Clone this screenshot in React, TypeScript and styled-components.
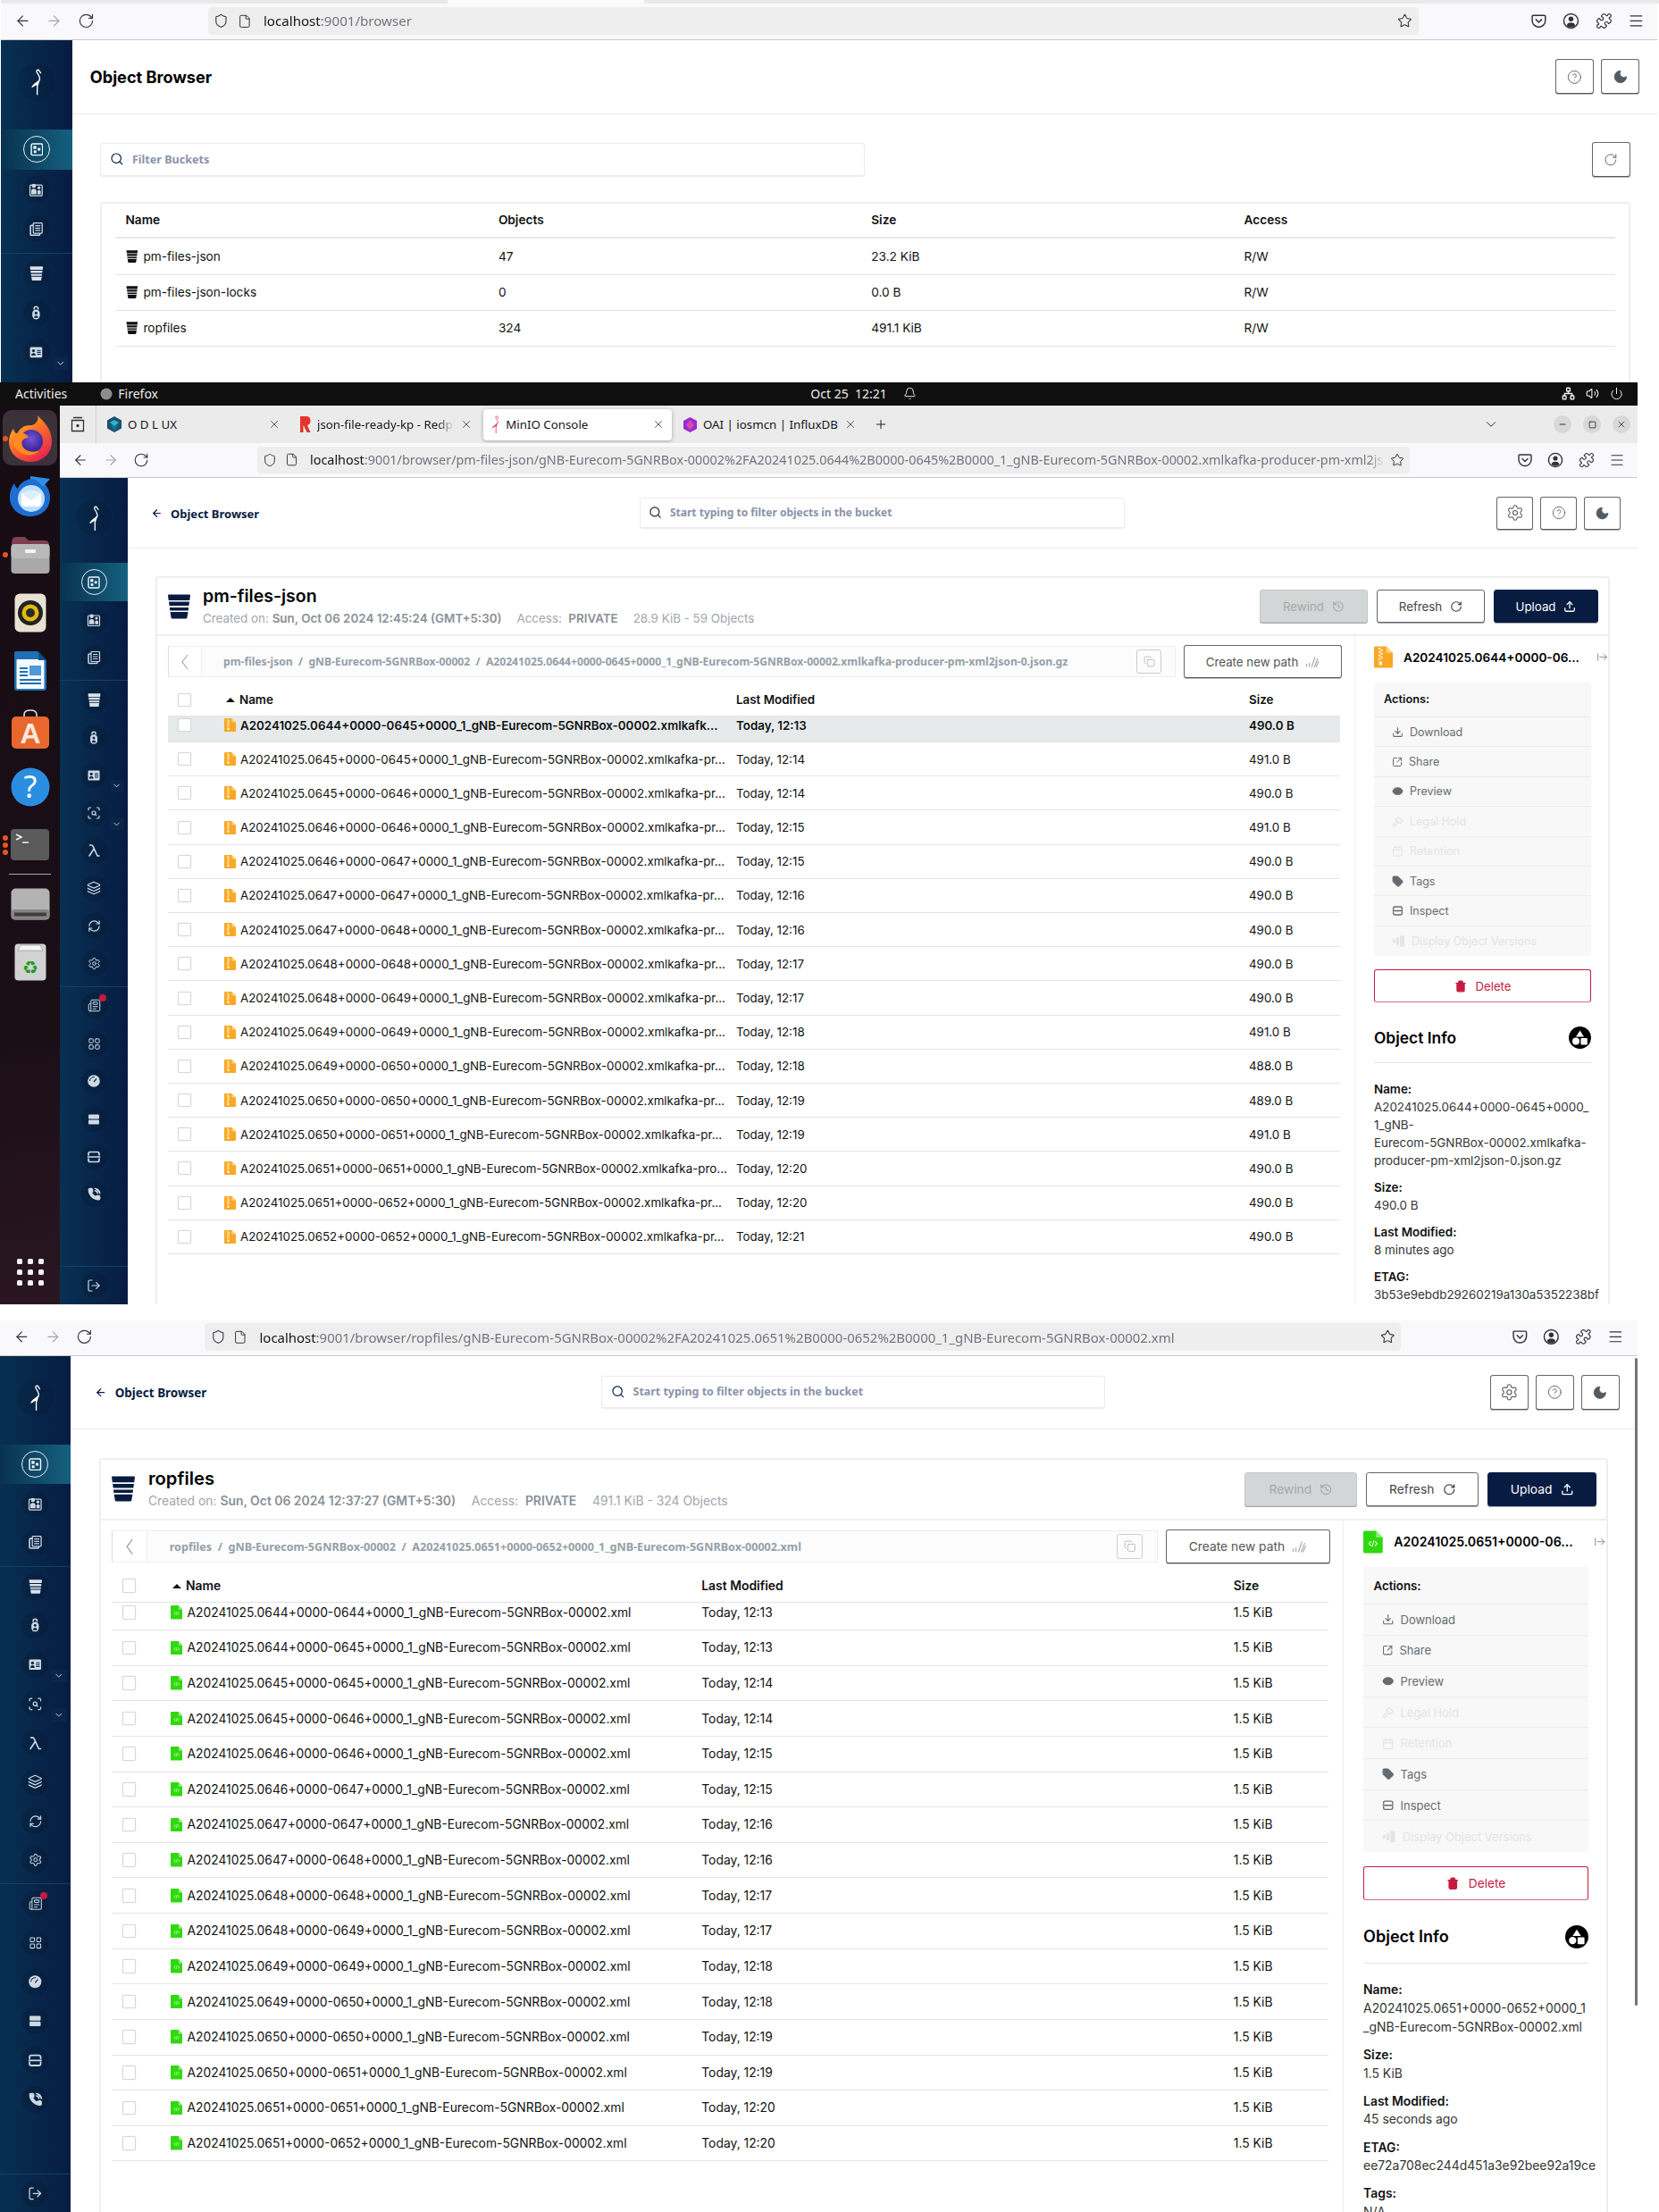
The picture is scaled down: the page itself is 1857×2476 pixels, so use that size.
import React from "react";
import styled, { createGlobalStyle } from "styled-components";
import {
  ArrowLeft, ArrowRight, RotateCw, Shield, File, Star, Menu, Puzzle, X, Plus, ChevronDown, Search,
  Settings, CircleHelp, Moon, History, Upload, Copy, Download, SquareArrowOutUpRight, Eye, Gavel,
  Calendar, Tag, Trash2, ArrowRightFromLine, LayoutGrid, Layers, RefreshCw,
  Newspaper, PhoneCall, LogOut, Minus, Square, Bell, Volume2, Power, Network, ScanSearch,
} from "lucide-react";

const INTER = `Inter, "Liberation Sans", sans-serif`;
const UBU = `"Noto Sans", "Open Sans", sans-serif`;
const NAVY = "#081c42";

const GlobalStyle = createGlobalStyle`
  html, body { margin: 0; padding: 0; background: #fff; }
  body { font-family: ${INTER}; color: #111; width: 1857px; height: 2476px; overflow: hidden; }
  * { box-sizing: border-box; }
`;

/* ---------- frames ---------- */
const Page = styled.div`display: flex; flex-direction: column; width: 1857px; height: 2476px; overflow: hidden;`;
const FirstShot = styled.section`height: 428px; overflow: hidden; padding-left: 1px;`;
const TabTail = styled.div`
  height: 4px; background: #e9e9e9; display: flex; padding-left: 500px;
  &::before { content: ""; width: 220px; background: #fbfbfb; }
`;
const SecondShot = styled.section`height: 1032px; overflow: hidden; width: 1833px; display: flex; flex-direction: column;`;
const DesktopRow = styled.div`display: flex; flex: 1; min-height: 0;`;
const ThirdShot = styled.section`height: 1016px; overflow: hidden; padding-top: 17.5px; position: relative;`;
const Browser = styled.div<{ $zoom: number; $h: number }>`
  zoom: ${(p) => p.$zoom};
  width: 1766px; height: ${(p) => p.$h}px;
  display: flex; flex-direction: column; overflow: hidden; background: #fff; flex: none;
`;
const ScrollThumb = styled.div`position: absolute; left: 1830px; top: 60px; width: 3px; height: 725px; background: #757575; border-radius: 2px;`;

/* ---------- GNOME ---------- */
const TopBar = styled.header`
  height: 26px; background: #0f0f0f; color: #ececec; display: grid; grid-template-columns: 1fr auto 1fr;
  align-items: center; font: 14px ${UBU}; padding-bottom: 1px;
`;
const TopLeft = styled.div`display: flex; align-items: center; padding-left: 17px; gap: 37px;`;
const TopApp = styled.span`display: flex; align-items: center; gap: 6px;`;
const TopCenter = styled.div`display: flex; align-items: center; gap: 18px; margin-left: 100px;`;
const TopRight = styled.div`display: flex; justify-content: flex-end; align-items: center; gap: 12px; padding-right: 16px;`;
const Dock = styled.nav`
  width: 67px; flex: none; display: flex; flex-direction: column; padding-top: 4px;
  background: linear-gradient(170deg, #160c12 0%, #1b0f16 70%, #2a1620 100%);
`;
const DockItem = styled.div`height: 65px; flex: none; display: flex; align-items: center; justify-content: center; position: relative;`;
const DockHighlight = styled(DockItem)`
  &::before { content: ""; position: absolute; inset: 1px 3px 2px 3px; border-radius: 10px; background: #3a3238; }
  & > svg { position: relative; }
`;
const DockDots = styled.span`
  position: absolute; left: 3px; top: 50%; transform: translateY(-50%); display: flex; flex-direction: column; gap: 2px;
  & > i { width: 6px; height: 6px; border-radius: 50%; background: #e95420; display: block; }
`;
const DockSep = styled.hr`margin: 0 10px; height: 1px; border: 0; background: #a9a5a8; flex: none;`;
const AppGrid = styled.div`
  margin-top: auto; margin-bottom: 21px; align-self: center; display: grid; grid-template-columns: repeat(3, 6px); gap: 6px 6px;
  & > i { width: 6px; height: 6px; background: #f2f2f2; border-radius: 1.5px; display: block; }
`;

/* ---------- firefox chrome ---------- */
const TabStrip = styled.div`height: 42px; flex: none; display: flex; align-items: center; background: #ebebeb; color: #15141a; font: 13.5px ${UBU};`;
const FxView = styled.div`width: 41px; height: 42px; flex: none; display: flex; align-items: center; justify-content: center; border-right: 1px solid #cfcfd8;`;
const TabList = styled.div`display: flex; align-items: center; gap: 4px; padding-left: 3px;`;
const TabItem = styled.div<{ $active?: boolean }>`
  width: 211px; height: 35px; display: flex; align-items: center; padding: 0 8px 0 9px; gap: 7px; border-radius: 4px;
  background: ${(p) => (p.$active ? "#fff" : "transparent")};
  box-shadow: ${(p) => (p.$active ? "0 1px 4px rgba(0,0,0,.3)" : "none")};
`;
const TabTitle = styled.span<{ $fade?: boolean }>`
  flex: 1; min-width: 0; white-space: nowrap; overflow: hidden; font-size: 13.3px;
  -webkit-mask-image: ${(p) => (p.$fade ? "linear-gradient(90deg, #000 88%, transparent)" : "none")};
`;
const TabRight = styled.div`display: flex; align-items: center; margin-left: auto; padding-right: 8px;`;
const NewTab = styled.div`margin-left: 11px; display: flex; align-items: center;`;
const WinBtn = styled.span`width: 20px; height: 20px; border-radius: 50%; background: #d8d8d8; display: flex; align-items: center; justify-content: center; margin-left: 13px;`;
const Toolbar = styled.div`height: 39px; flex: none; display: flex; align-items: center; background: #f9f9fb; border-bottom: 1px solid #c8c8cc; padding-bottom: 1px;`;
const NavGroup = styled.div`width: 221px; flex: none; display: flex; align-items: center; gap: 16px; padding-left: 14px; color: #33323a;`;
const UrlPill = styled.div`width: 1290px; height: 30px; flex: none; background: #eeeeef; border-radius: 4px; display: flex; align-items: center; padding: 0 6px 0 6px; color: #33323a;`;
const UrlIcons = styled.div`width: 45px; flex: none; display: flex; gap: 9px; align-items: center;`;
const UrlText = styled.div`flex: 1; min-width: 0; white-space: nowrap; overflow: hidden; font: 14.4px ${UBU}; color: #74747c; margin: 0 6px 0 8px; -webkit-mask-image: linear-gradient(90deg, #000 98.5%, transparent);`;
const UrlHost = styled.span`color: #15141a;`;
const ToolIcons = styled.div`margin-left: auto; display: flex; align-items: center; gap: 16.5px; padding-right: 14px; color: #33323a;`;

/* ---------- sidebar ---------- */
const Body = styled.div`flex: 1; min-height: 0; display: flex;`;
const Side = styled.aside`width: 76px; height: 925px; flex: none; display: flex; flex-direction: column; background: linear-gradient(90deg, #073052 0%, ${NAVY} 100%); color: #cfd8e3;`;
const SideLogo = styled.div`height: 95px; flex: none; display: flex; align-items: flex-start; justify-content: center; padding-top: 25px;`;
const LogoDisc = styled.div`width: 40px; height: 40px; border-radius: 50%; display: flex; align-items: center; justify-content: center; background: rgba(0,0,0,.07);`;
const SideGroup = styled.div`display: flex; flex-direction: column; padding-bottom: 4px; border-bottom: 1px solid #0e4266;`;
const SideFree = styled.div`display: flex; flex-direction: column;`;
const SideBottom = styled.div`margin-top: auto; border-top: 1px solid #0e4266; display: flex; flex-direction: column;`;
const SideItem = styled.div<{ $active?: boolean }>`
  height: ${(p) => (p.$active ? 43 : 42.2)}px; flex: none; display: flex; align-items: center; justify-content: center; position: relative;
  background: ${(p) => (p.$active ? "linear-gradient(90deg, #08324f 0%, #15607f 100%)" : "transparent")};
`;
const SideDisc = styled.span<{ $active?: boolean }>`
  width: 29px; height: 29px; border-radius: 50%; display: flex; align-items: center; justify-content: center; position: relative;
  background: ${(p) => (p.$active ? "transparent" : "rgba(0,0,0,.1)")};
  border: ${(p) => (p.$active ? "1.5px solid #e8eef3" : "0")};
`;
const Chevron = styled.span`position: absolute; right: 5px; bottom: 2px; width: 15px; height: 14px; background: #0a2548; display: flex; align-items: center; justify-content: center;`;
const RedDot = styled.span`position: absolute; top: 2px; right: 1px; width: 8px; height: 8px; border-radius: 50%; background: #c51b3f;`;

/* ---------- shared page ---------- */
const Main = styled.main`flex: 1; min-width: 0; display: flex; flex-direction: column; height: 925px;`;
const PageHeader = styled.div`height: 79px; flex: none; display: flex; align-items: center; border-bottom: 1px solid #eaeaea;`;
const PageTitle = styled.h1`margin: 0 0 0 19px; font: 700 17.3px ${INTER}; color: #000;`;
const BackLink = styled.div`width: 573px; flex: none; padding-left: 26px; display: flex; align-items: center; gap: 9px; font: 700 13px ${UBU}; color: ${NAVY}; margin-top: 1px;`;
const HeaderBtns = styled.div`margin-left: auto; display: flex; gap: 8px; padding-right: 19px;`;
const IconBtn = styled.div`width: 41px; height: 37px; flex: none; border: 1px solid #666; border-bottom-color: #555; border-radius: 3px; display: flex; align-items: center; justify-content: center; background: #fff; color: #525a62; box-shadow: 0 1px 0 #bbb;`;
const FilterBox = styled.div<{ $w: number; $h: number }>`
  width: ${(p) => p.$w}px; height: ${(p) => p.$h}px; flex: none; display: flex; align-items: center; gap: 9px; padding-left: 9px;
  border: 1px solid #ececec; border-bottom: 2px solid #ececec; border-radius: 3px; background: #fff; color: ${NAVY};
`;
const Placeholder = styled.span`font: 700 12px ${UBU}; color: #8a93a8; white-space: nowrap;`;

/* ---------- bucket list ---------- */
const ListBar = styled.div`display: flex; justify-content: space-between; align-items: center; margin: 30px 29px 26px 30px;`;
const ListCard = styled.div`margin: 0 29px 0 30px; border: 2px solid #eee; border-radius: 3px; padding: 0 14px; flex: 1;`;
const BucketGrid = styled.div<{ $head?: boolean }>`
  display: grid; grid-template-columns: repeat(4, 397.5px) 1fr; align-items: center;
  height: ${(p) => (p.$head ? 38 : 38.2)}px; border-bottom: ${(p) => (p.$head ? "2px solid #e7e7e7" : "1px solid #e4e4e4")};
  font: ${(p) => (p.$head ? 600 : 400)} 13px ${INTER}; color: #111;
`;
const Cell = styled.div`padding-left: 11px; display: flex; align-items: center; gap: 6px; white-space: nowrap;`;

/* ---------- detail ---------- */
const DetailCard = styled.div`margin: 31px 31px 0 31px; border: 2px solid #eee; border-bottom: 0; flex: 1; min-height: 0; display: flex; flex-direction: column; border-radius: 3px 3px 0 0;`;
const CardHead = styled.div`height: 65px; flex: none; display: flex; align-items: center; padding: 0 11px; border-bottom: 2px solid #eee;`;
const CardTitles = styled.div`margin-left: 13px; display: flex; flex-direction: column; gap: 5px; margin-bottom: 2px;`;
const BucketName = styled.h2`margin: 0; font: 600 19.5px/23px ${INTER}; color: #000;`;
const BucketMeta = styled.div`display: flex; gap: 17px; font: 400 13.4px ${INTER}; color: #a0a6ad; white-space: nowrap;`;
const Strong = styled.b`font-weight: 600; color: #8a9097;`;
const HeadBtns = styled.div`margin-left: auto; display: flex; gap: 10px;`;
const ActionBtn = styled.div<{ $kind: "off" | "line" | "solid" }>`
  width: ${(p) => (p.$kind === "solid" ? 117 : 121)}px; height: 37px; border-radius: 3px; display: flex; align-items: center; justify-content: center; gap: 9px;
  font: 400 13.3px ${INTER};
  background: ${(p) => (p.$kind === "off" ? "#d3d6d6" : p.$kind === "solid" ? NAVY : "#fff")};
  color: ${(p) => (p.$kind === "off" ? "#a4a9a9" : p.$kind === "solid" ? "#fff" : "#444")};
  border: 1px solid ${(p) => (p.$kind === "off" ? "#c4c7c7" : p.$kind === "solid" ? NAVY : "#666")};
  box-shadow: 0 1px 0 #aaa;
`;
const CardBody = styled.div`flex: 1; min-height: 0; display: flex;`;
const LeftPane = styled.div`width: 1341px; flex: none; padding: 10px 12px 0 12px; display: flex; flex-direction: column; min-height: 0; border-right: 1px solid #eee;`;
const PathRow = styled.div`display: flex; gap: 9px; align-items: center; flex: none;`;
const PathBar = styled.div`width: 1128px; height: 35px; flex: none; display: flex; align-items: center; background: #fcfcfc; border: 1px solid #eee; border-left-color: #ddd;`;
const PathBack = styled.div`width: 37px; height: 33px; flex: none; display: flex; align-items: center; justify-content: center; border-right: 1px solid #eee; background: #fff; color: #8a8f95;`;
const PathText = styled.div`flex: 1; min-width: 0; padding-left: 24px; font: 700 12.15px ${UBU}; color: #969fa8; white-space: nowrap; overflow: hidden;`;
const CopyBtn = styled.div`width: 28px; height: 27px; flex: none; margin-right: 15px; border: 1px solid #c9ced3; border-radius: 3px; display: flex; align-items: center; justify-content: center; color: #a9b0b6;`;
const CreateBtn = styled.div`width: 177px; height: 37px; flex: none; border: 1px solid #666; border-bottom-color: #555; border-radius: 3px; display: flex; align-items: center; justify-content: center; gap: 8px; font: 400 13.3px ${INTER}; color: #555; box-shadow: 0 1px 0 #bbb;`;
const objCols = "62px 574px 574px 1fr";
const ObjHead = styled.div`
  height: 42.5px; flex: none; display: grid; grid-template-columns: ${objCols}; align-items: center;
  border-bottom: 1px solid #e2e2e2; font: 600 13.4px ${INTER}; color: #111; width: 1312px; padding-top: 6.5px;
`;
const NameHead = styled.div`display: flex; align-items: center; gap: 5px; margin-left: -4px;`;
const SortUp = styled.i`width: 0; height: 0; border: 5px solid transparent; border-top: 0; border-bottom: 5px solid #111; display: block; margin-left: 7px;`;
const ObjViewport = styled.div`flex: 1; min-height: 0; overflow: hidden; width: 1312px;`;
const ObjScroll = styled.div`margin-top: -8.6px; display: flex; flex-direction: column;`;
const ObjRow = styled.div<{ $sel?: boolean }>`
  height: 38.2px; flex: none; display: grid; grid-template-columns: ${objCols}; align-items: center;
  border-bottom: 1px solid #e5e5e5; font: ${(p) => (p.$sel ? 600 : 400)} 13.35px ${INTER}; color: #111; white-space: nowrap;
  background: ${(p) => (p.$sel ? "#e6eaeb" : "transparent")};
`;
const Check = styled.span`width: 15px; height: 15px; margin-left: 11px; display: block; background: #fff; border: 1.5px solid #d7d7d7; border-radius: 2px; box-shadow: 0 0 1px #ccc;`;
const NameCell = styled.div`display: flex; align-items: center; gap: 5px; margin-left: 1px;`;
const RightPane = styled.div`flex: 1; min-width: 0; padding: 10px 0 0 21px; overflow: hidden;`;
const PaneTitle = styled.div`height: 27px; display: flex; align-items: center; gap: 12px; width: 262px; font: 600 13.6px ${INTER}; color: #000; white-space: nowrap;`;
const PaneEnd = styled.span`margin-left: auto; color: #666; display: flex;`;
const ActionsBox = styled.div`width: 243px; margin-top: 14px; background: #f8f8f8; border-radius: 3px; display: flex; flex-direction: column;`;
const ActionsHead = styled.div`height: 40px; display: flex; align-items: center; padding-left: 11px; font: 600 12.8px ${INTER}; color: #111; border-bottom: 1px solid #e9e9e9;`;
const ActionRow = styled.div<{ $off?: boolean }>`
  height: 33.4px; display: flex; align-items: center; gap: 7px; padding-left: 20px; font: 400 12.5px ${INTER};
  color: ${(p) => (p.$off ? "#e4e4e4" : "#656b70")}; border-bottom: 1px solid #ececec;
  &:last-child { border-bottom: 0; }
`;
const DeleteBtn = styled.div`width: 243px; height: 37px; margin-top: 15px; border: 1.5px solid #c51b3f; border-bottom-color: #dc6c83; border-radius: 3px; display: flex; align-items: center; justify-content: center; gap: 10px; font: 400 13.2px ${INTER}; color: #c51b3f;`;
const InfoHead = styled.div`width: 243px; height: 68px; display: flex; align-items: center; justify-content: space-between; border-bottom: 1px solid #e4e4e4; font: 600 17.4px ${INTER}; color: #000; padding-top: 16px; padding-bottom: 4px;`;
const InfoList = styled.div`padding-top: 19px; display: flex; flex-direction: column; gap: 10px;`;
const InfoItem = styled.div`font: 400 13.4px/20px ${INTER}; color: #333; white-space: nowrap;`;
const InfoLabel = styled.div`font-weight: 600; color: #111;`;

/* ---------- custom drawings ---------- */
const Flamingo = ({ color = "#fff", h = 28 }: { color?: string; h?: number }) => (
  <svg width={(h * 13) / 28} height={h} viewBox="0 0 13 28" fill="none" stroke={color} strokeWidth={1.3} strokeLinecap="round" strokeLinejoin="round">
    <path d="M11 4.500 8.800 1.200C7 .8 6.200 2.400 7 4 9 7 10.600 9 9.800 11.800 9 14.200 4.600 15 2 19.200L7.300 15.800V27.400" />
    <path d="M9.800 11.800C9.300 14.400 8.400 16.400 7.800 18.400L7.300 15.800 2 19.200C4.200 15.400 8.200 14.200 9.800 11.800Z" fill={color} strokeWidth={0.5} />
  </svg>
);
const BucketIcon = ({ w, color = NAVY }: { w: number; color?: string }) => (
  <svg width={w} height={(w * 28) / 27} viewBox="0 0 27 28">
    <path d="M1 1.500Q1 .5 2 .5H25Q26 .5 26 1.500L25.300 7H1.700Z" fill={color} />
    <path d="M2 8.600H25L24.400 13H2.600Z" fill={color} />
    <path d="M2.800 15H24.200L23.700 18.400H3.300Z" fill={color} />
    <path d="M3.500 20H23.500L22.400 26.400Q22.200 27.500 21 27.500H6Q4.800 27.500 4.600 26.400Z" fill={color} />
  </svg>
);
const ZipIcon = ({ w, h }: { w: number; h: number }) => (
  <svg width={w} height={h} viewBox="0 0 13 15">
    <path d="M1 0H8.500L13 4.500V14Q13 15 12 15H1Q0 15 0 14V1Q0 0 1 0Z" fill="#f9a825" />
    <path d="M8.500 0 13 4.500H8.500Z" fill="#fcd27f" />
    <path d="M3 1H4.500V2.200H3ZM4.500 2.200H6V3.400H4.500ZM3 3.400H4.500V4.600H3ZM4.500 4.600H6V5.800H4.500ZM3 5.800H4.500V7H3ZM4.500 7H6V8.200H4.500ZM3 8.200H4.500V9.400H3ZM3.400 10.400H5.600V13H3.400Z" fill="#fff3d6" />
  </svg>
);
const XmlIcon = ({ w, h }: { w: number; h: number }) => (
  <svg width={w} height={h} viewBox="0 0 13 15">
    <path d="M1 0H8.500L13 4.500V14Q13 15 12 15H1Q0 15 0 14V1Q0 0 1 0Z" fill="#30d90f" />
    <path d="M8.500 0 13 4.500H8.500Z" fill="#8aec76" />
    <path d="M5.200 7 3.800 8.600 5.200 10.200M7.800 7 9.200 8.600 7.800 10.200M7 6.600 6 10.600" stroke="#d6fbcd" strokeWidth={0.7} fill="none" />
  </svg>
);
const ClusterIcon = () => (
  <svg width="25" height="25" viewBox="0 0 25 25">
    <circle cx="12.500" cy="12.500" r="12.500" fill="#000" />
    <path d="M12.500 4.500 17 11.500H8Z" fill="#fff" />
    <circle cx="8" cy="16.500" r="4" fill="#fff" />
    <rect x="13.400" y="13" width="7.400" height="7.400" rx="1" fill="#fff" />
  </svg>
);
const PocketIcon = () => (
  <svg width="18" height="18" viewBox="0 0 18 18" fill="none" stroke="currentColor" strokeWidth="1.4" strokeLinecap="round" strokeLinejoin="round">
    <path d="M3 3H15Q16 3 16 4V8.500A7 7 0 0 1 2 8.500V4Q2 3 3 3Z" />
    <path d="M6 7.500 9 10.500 12 7.500" />
  </svg>
);
const AccountIcon = () => (
  <svg width="18" height="18" viewBox="0 0 18 18">
    <circle cx="9" cy="9" r="7.600" fill="none" stroke="currentColor" strokeWidth="1.4" />
    <circle cx="9" cy="7" r="2.600" fill="currentColor" />
    <path d="M4.500 14Q5 10.800 9 10.800 13 10.800 13.500 14 11.500 15.800 9 15.800 6.500 15.800 4.500 14Z" fill="currentColor" />
  </svg>
);
const ObjectsGlyph = () => (
  <svg width="14" height="14" viewBox="0 0 14 14" fill="none">
    <rect x="1" y="1" width="12" height="12" rx="1.500" stroke="#f2f6f9" strokeWidth="1.400" />
    <rect x="3.200" y="3.200" width="3.200" height="3.200" fill="#f2f6f9" />
    <rect x="7.800" y="5.400" width="2.800" height="2.800" fill="#f2f6f9" />
    <rect x="3.600" y="8" width="2.800" height="2.800" fill="#f2f6f9" />
  </svg>
);
const IdentityGlyph = () => (
  <svg width="16" height="16" viewBox="0 0 16 16">
    <rect x="1.500" y="3" width="13" height="11.500" rx="1" fill="none" stroke="currentColor" strokeWidth="1.200" />
    <circle cx="5.600" cy="3.800" r="2.200" fill="currentColor" />
    <path d="M2.800 12.800V10Q2.800 7 5.600 7 8.400 7 8.400 10V12.800Z" fill="currentColor" />
    <circle cx="11" cy="6" r="1.600" fill="currentColor" />
    <path d="M9.400 12.800V10Q9.400 8.400 11 8.400 13 8.400 13 10V12.800Z" fill="currentColor" />
  </svg>
);
const DocsGlyph = () => (
  <svg width="16" height="16" viewBox="0 0 16 16" fill="none" stroke="currentColor" strokeWidth="1.200">
    <rect x="5" y="1.500" width="9.500" height="11" rx=".8" />
    <path d="M7 4.500H12.500M7 7H12.500M7 9.500H12.500" />
    <path d="M5 4H3Q2 4 2 5V13.500Q2 14.500 3 14.500H11Q12 14.500 12 13.500V12.500" strokeWidth="1.500" />
  </svg>
);
const LockGlyph = () => (
  <svg width="16" height="16" viewBox="0 0 16 16" fill="none" stroke="currentColor" strokeWidth="1.400">
    <path d="M5.800 4.300V3.500Q5.800 1.200 8 1.200 10.200 1.200 10.200 3.500V4.300" />
    <rect x="4" y="4.300" width="8" height="10.500" rx="4" fill="currentColor" stroke="none" />
    <circle cx="8" cy="8" r="1.500" fill="#08284c" stroke="none" />
    <path d="M5.800 13.200Q5.800 10.600 8 10.600 10.200 10.600 10.200 13.200Z" fill="#08284c" stroke="none" />
  </svg>
);
const CardGlyph = () => (
  <svg width="16" height="16" viewBox="0 0 16 16">
    <rect x="1.500" y="2.500" width="13" height="11" rx="1.200" fill="currentColor" />
    <circle cx="5.200" cy="6.300" r="1.600" fill="#08284c" />
    <path d="M2.800 11.500Q3 8.700 5.200 8.700 7.400 8.700 7.600 11.500Z" fill="#08284c" />
    <path d="M9 6H13M9 8H13M9 10H13" stroke="#08284c" strokeWidth="1" />
  </svg>
);
const InspectGlyph = ({ s = 16 }: { s?: number }) => (
  <svg width={s} height={s} viewBox="0 0 16 16" fill="none" stroke="currentColor" strokeWidth="1.700" strokeLinecap="round">
    <path d="M2 6V4.500Q2 2.500 4 2.500H12Q14 2.500 14 4.500V6M2 10V11.500Q2 13.500 4 13.500H12Q14 13.500 14 11.500V10M1.500 8H14.500" />
  </svg>
);
const DrivesGlyph = () => (
  <svg width="16" height="16" viewBox="0 0 16 16" fill="currentColor">
    <rect x="2" y="2.500" width="12" height="5" rx="1" />
    <rect x="2" y="8.500" width="12" height="5" rx="1" />
  </svg>
);
const GaugeGlyph = () => (
  <svg width="16" height="16" viewBox="0 0 16 16">
    <circle cx="8" cy="8" r="6.800" fill="currentColor" />
    <path d="M8 9 11 5.500" stroke="#0a3052" strokeWidth="1.200" />
    <path d="M3.600 8A4.400 4.400 0 0 1 9 3.700" stroke="#0a3052" strokeWidth="1" fill="none" />
  </svg>
);
const LambdaGlyph = () => (
  <svg width="16" height="16" viewBox="0 0 16 16" fill="none" stroke="currentColor" strokeWidth="1.600" strokeLinecap="round">
    <path d="M3.500 2H5.500Q6.500 2 7 3.200L12 14H14M8.200 6 3 14" />
  </svg>
);
const VersionsGlyph = () => (
  <svg width="15" height="15" viewBox="0 0 15 15" fill="currentColor">
    <rect x="1" y="5.500" width="3" height="4" />
    <rect x="5" y="3.500" width="3" height="8" />
    <rect x="9" y="1.500" width="5" height="12" />
  </svg>
);
const PathSlashes = () => (
  <svg width="16" height="14" viewBox="0 0 16 14" fill="none" stroke="#a5a9ad" strokeWidth="1.100">
    <path d="M1.500 12.500V9M4.500 12.500V8M7 13 11 1.500M10 13 14 3M12 13 15 6" />
  </svg>
);

/* dock */
const Firefox = () => (
  <svg width="52" height="54" viewBox="0 0 52 54">
    <defs>
      <linearGradient id="ff1" x1="0" y1="0" x2="0.7" y2="1"><stop offset="0" stopColor="#ffd43a" /><stop offset=".45" stopColor="#ff7a26" /><stop offset="1" stopColor="#e7234f" /></linearGradient>
      <radialGradient id="ff2" cx=".5" cy=".4"><stop offset="0" stopColor="#7a52d8" /><stop offset="1" stopColor="#3b2a9a" /></radialGradient>
    </defs>
    <path d="M34 1C41 8 50 16 50 30 50 44 39 53 26 53 12 53 2 43 2 30 2 25 4 20 7 16 8 19 9 21 11 22 14 15 19 12 26 12 31 12 36 7 34 1Z" fill="url(#ff1)" />
    <circle cx="27" cy="30" r="13" fill="url(#ff2)" />
    <path d="M8 22C16 18 22 22 24 26 18 26 15 30 17 35 19 40 28 44 36 40 30 49 12 47 7 33Z" fill="#ff8a1f" />
  </svg>
);
const Thunderbird = () => (
  <svg width="48" height="46" viewBox="0 0 48 46">
    <path d="M24 3C38 3 46 12 46 24 46 36 37 45 24 45 11 45 1 36 1 24 1 17 3 12 6 8 7 11 8 13 10 14 12 8 17 5 24 3Z" fill="#1c6fd0" />
    <path d="M24 0 46 3 38 12C34 6 29 3 24 3Z" fill="#2f8ee8" />
    <circle cx="25" cy="25" r="15" fill="#bfe0fb" />
    <path d="M14 19 25 27 36 19V30Q36 34 32 34H18Q14 34 14 30Z" fill="#fff" />
    <path d="M14 19Q25 12 36 19L25 27Z" fill="#dcefff" />
  </svg>
);
const FilesIcon = () => (
  <svg width="44" height="42" viewBox="0 0 44 42">
    <path d="M1 8Q1 1 6 1H16L20 5H38Q43 5 43 10V20H1Z" fill="#7f3f50" />
    <rect x="0.500" y="9" width="43" height="33" rx="4" fill="#a8a8a8" />
    <rect x="0.500" y="9" width="43" height="16" rx="4" fill="#b9b9b9" />
    <rect x="16" y="15" width="12" height="4" rx="1" fill="#f4f4f4" />
  </svg>
);
const Rhythmbox = () => (
  <svg width="36" height="44" viewBox="0 0 36 44">
    <rect x="0.500" y="0.500" width="35" height="43" rx="6" fill="#e8e2d2" />
    <circle cx="18" cy="22" r="14" fill="#222" />
    <circle cx="18" cy="22" r="9.500" fill="#e2b90f" />
    <circle cx="18" cy="22" r="5" fill="#2a2a2a" />
  </svg>
);
const Writer = () => (
  <svg width="36" height="44" viewBox="0 0 36 44">
    <path d="M2 0H26L36 10V41Q36 44 33 44H3Q0 44 0 41V2Q0 0 2 0Z" fill="#1f6fb5" />
    <rect x="2.500" y="9" width="31" height="33" rx="1" fill="#f5fafd" />
    <path d="M27 0 36 10H27Z" fill="#0e4e88" />
    <rect x="6" y="18" width="9" height="2" fill="#1f6fb5" /><rect x="6" y="22" width="9" height="2" fill="#1f6fb5" /><rect x="6" y="26" width="9" height="2" fill="#1f6fb5" />
    <rect x="17" y="16" width="13" height="11" fill="#4f9ad6" />
    <rect x="6" y="31" width="24" height="2" fill="#1f6fb5" /><rect x="6" y="35" width="24" height="2" fill="#1f6fb5" />
  </svg>
);
const Software = () => (
  <svg width="44" height="44" viewBox="0 0 44 44">
    <path d="M15 10V6Q15 1 22 1 29 1 29 6V10" fill="none" stroke="#ddd" strokeWidth="1.600" />
    <rect x="1" y="8" width="42" height="36" rx="5" fill="#e9662c" />
    <text x="22" y="38" textAnchor="middle" fontFamily="Liberation Sans, sans-serif" fontWeight="700" fontSize="32" fill="#fbe8dd">A</text>
  </svg>
);
const HelpIcon = () => (
  <svg width="44" height="44" viewBox="0 0 44 44">
    <circle cx="22" cy="22" r="21.500" fill="#2a8ee0" />
    <text x="22" y="34" textAnchor="middle" fontFamily="Noto Sans, sans-serif" fontSize="34" fill="#fff">?</text>
  </svg>
);
const TerminalIcon = () => (
  <svg width="43" height="35" viewBox="0 0 43 35">
    <rect width="43" height="35" rx="4" fill="#5a5a5a" />
    <path d="M6 6 12 9 6 12M13 15H20" stroke="#f2f2f2" strokeWidth="1.600" fill="none" />
  </svg>
);
const DriveIcon = () => (
  <svg width="44" height="36" viewBox="0 0 44 36">
    <rect x="0.500" y="0.500" width="43" height="35" rx="5" fill="#b3b3b3" />
    <rect x="0.500" y="24" width="43" height="11.500" rx="4" fill="#858585" />
    <rect x="4" y="27.500" width="36" height="4" fill="#3e3e3e" />
  </svg>
);
const TrashIcon = () => (
  <svg width="36" height="42" viewBox="0 0 36 42">
    <rect x="0.500" y="0.500" width="35" height="41" rx="4" fill="#d2d2d2" />
    <path d="M4 8 7 2H29L32 8Z" fill="#f6f6f6" stroke="#888" strokeWidth=".6" />
    <text x="18" y="34" textAnchor="middle" fontFamily="DejaVu Sans, sans-serif" fontSize="20" fill="#1f9a22">♻</text>
  </svg>
);
const OdluxFav = () => (
  <svg width="16" height="18" viewBox="0 0 16 18" style={{ flex: "none" }}>
    <path d="M8 0 16 4.500V13.500L8 18 0 13.500V4.500Z" fill="#1d4f6e" />
    <path d="M8 4 13 7 8 11 3 7Z" fill="#29b8c9" />
    <path d="M3 8 8 12 13 8 8 16Z" fill="#0d7f9a" />
  </svg>
);
const RedFav = () => (
  <svg width="13" height="20" viewBox="0 0 13 20" style={{ flex: "none" }}>
    <path d="M1 1H8Q12.500 1 12.500 6 12.500 10 9 11L12.500 19H8.500L5 11.500H4.500V19H1Z" fill="#e5342c" />
  </svg>
);
const InfluxFav = () => (
  <svg width="15" height="17" viewBox="0 0 15 17" style={{ flex: "none" }}>
    <path d="M7.500 0 15 4V13L7.500 17 0 13V4Z" fill="#9b2ad6" />
    <path d="M7.500 3 12 8.500 7.500 14 3 8.500Z" fill="#d44fa8" />
  </svg>
);

/* ---------- composed parts ---------- */
const I = { stroke: 1.5 };

function BrowserBar({ host, path }: { host: string; path: string }) {
  return (
    <Toolbar>
      <NavGroup>
        <ArrowLeft size={18} strokeWidth={I.stroke} />
        <ArrowRight size={18} strokeWidth={I.stroke} color="#a3a3a8" />
        <RotateCw size={18} strokeWidth={I.stroke} />
      </NavGroup>
      <UrlPill>
        <UrlIcons>
          <Shield size={16} strokeWidth={I.stroke} />
          <File size={15} strokeWidth={I.stroke} />
        </UrlIcons>
        <UrlText><UrlHost>{host}</UrlHost>{path}</UrlText>
        <Star size={16} strokeWidth={I.stroke} />
      </UrlPill>
      <ToolIcons>
        <PocketIcon />
        <AccountIcon />
        <Puzzle size={18} strokeWidth={I.stroke} />
        <Menu size={18} strokeWidth={I.stroke} />
      </ToolIcons>
    </Toolbar>
  );
}

const sideGroups: { icon: React.ReactNode; chevron?: boolean; badge?: boolean }[][] = [
  [
    { icon: <IdentityGlyph /> },
    { icon: <DocsGlyph /> },
  ],
  [
    { icon: <BucketIcon w={15} color="#d9e1ea" /> },
    { icon: <LockGlyph /> },
    { icon: <CardGlyph />, chevron: true },
    { icon: <ScanSearch size={16} strokeWidth={1.8} />, chevron: true },
    { icon: <LambdaGlyph /> },
    { icon: <Layers size={16} strokeWidth={1.8} /> },
    { icon: <RefreshCw size={15} strokeWidth={1.8} /> },
    { icon: <Settings size={15} strokeWidth={1.6} /> },
  ],
  [
    { icon: <Newspaper size={15} strokeWidth={1.6} />, badge: true },
    { icon: <LayoutGrid size={15} strokeWidth={1.6} /> },
    { icon: <GaugeGlyph /> },
    { icon: <DrivesGlyph /> },
    { icon: <InspectGlyph /> },
    { icon: <PhoneCall size={15} strokeWidth={2} fill="currentColor" /> },
  ],
];

function SideEntry({ icon, chevron, badge }: { icon: React.ReactNode; chevron?: boolean; badge?: boolean }) {
  return (
    <SideItem>
      <SideDisc>
        {icon}
        {badge && <RedDot />}
      </SideDisc>
      {chevron && <Chevron><ChevronDown size={11} color="#cfd8e3" /></Chevron>}
    </SideItem>
  );
}

function Sidebar() {
  return (
    <Side>
      <SideLogo><LogoDisc><Flamingo /></LogoDisc></SideLogo>
      <SideGroup>
        <SideItem $active><SideDisc $active><ObjectsGlyph /></SideDisc></SideItem>
        {sideGroups[0].map((e, i) => <SideEntry key={i} {...e} />)}
      </SideGroup>
      <SideGroup>
        {sideGroups[1].map((e, i) => <SideEntry key={i} {...e} />)}
      </SideGroup>
      <SideFree>
        {sideGroups[2].map((e, i) => <SideEntry key={i} {...e} />)}
      </SideFree>
      <SideBottom>
        <SideEntry icon={<LogOut size={16} strokeWidth={1.8} />} />
      </SideBottom>
    </Side>
  );
}

function HeaderButtons({ gear }: { gear?: boolean }) {
  return (
    <HeaderBtns>
      {gear && <IconBtn><Settings size={20} strokeWidth={1.3} /></IconBtn>}
      <IconBtn><CircleHelp size={16} strokeWidth={1.3} /></IconBtn>
      <IconBtn><Moon size={17} fill="#525a62" strokeWidth={1.2} /></IconBtn>
    </HeaderBtns>
  );
}

const buckets = [
  ["pm-files-json", "47", "23.2 KiB", "R/W"],
  ["pm-files-json-locks", "0", "0.0 B", "R/W"],
  ["ropfiles", "324", "491.1 KiB", "R/W"],
];

function BucketList() {
  return (
    <Main>
      <PageHeader>
        <PageTitle>Object Browser</PageTitle>
        <HeaderButtons />
      </PageHeader>
      <ListBar>
        <FilterBox $w={815} $h={36}>
          <Search size={15} strokeWidth={1.8} />
          <Placeholder>Filter Buckets</Placeholder>
        </FilterBox>
        <IconBtn><RotateCw size={15} strokeWidth={1.4} /></IconBtn>
      </ListBar>
      <ListCard>
        <BucketGrid $head>
          <Cell>Name</Cell><Cell>Objects</Cell><Cell>Size</Cell><Cell>Access</Cell>
        </BucketGrid>
        {buckets.map((b) => (
          <BucketGrid key={b[0]}>
            <Cell><BucketIcon w={13} color="#111" />{b[0]}</Cell>
            <Cell>{b[1]}</Cell><Cell>{b[2]}</Cell><Cell>{b[3]}</Cell>
          </BucketGrid>
        ))}
      </ListCard>
    </Main>
  );
}

type Obj = { name: string; time: string; size: string };
type Detail = {
  bucket: string; created: string; usage: string; path: string; kind: "zip" | "xml"; rows: Obj[];
  title: string; infoName: string[]; size: string; modified: string; etag: string;
};

function FileGlyph({ kind, w, h }: { kind: "zip" | "xml"; w: number; h: number }) {
  return kind === "zip" ? <ZipIcon w={w} h={h} /> : <XmlIcon w={w} h={h} />;
}

const actions: { label: string; icon: React.ReactNode; off?: boolean }[] = [
  { label: "Download", icon: <Download size={13} /> },
  { label: "Share", icon: <SquareArrowOutUpRight size={12} /> },
  { label: "Preview", icon: <Eye size={13} fill="currentColor" stroke="currentColor" /> },
  { label: "Legal Hold", icon: <Gavel size={13} />, off: true },
  { label: "Retention", icon: <Calendar size={13} />, off: true },
  { label: "Tags", icon: <Tag size={13} fill="currentColor" /> },
  { label: "Inspect", icon: <InspectGlyph s={13} /> },
  { label: "Display Object Versions", icon: <VersionsGlyph />, off: true },
];

function BucketDetail({ d }: { d: Detail }) {
  return (
    <Main>
      <PageHeader>
        <BackLink><ArrowLeft size={13} strokeWidth={2.2} />Object Browser</BackLink>
        <FilterBox $w={543} $h={35}>
          <Search size={15} strokeWidth={1.8} />
          <Placeholder>Start typing to filter objects in the bucket</Placeholder>
        </FilterBox>
        <HeaderButtons gear />
      </PageHeader>
      <DetailCard>
        <CardHead>
          <BucketIcon w={27} />
          <CardTitles>
            <BucketName>{d.bucket}</BucketName>
            <BucketMeta>
              <span>Created on: <Strong>{d.created}</Strong></span>
              <span>Access:&nbsp; <Strong>PRIVATE</Strong></span>
              <span>{d.usage}</span>
            </BucketMeta>
          </CardTitles>
          <HeadBtns>
            <ActionBtn $kind="off">Rewind <History size={14} /></ActionBtn>
            <ActionBtn $kind="line">Refresh <RotateCw size={14} /></ActionBtn>
            <ActionBtn $kind="solid">Upload <Upload size={14} strokeWidth={2.2} /></ActionBtn>
          </HeadBtns>
        </CardHead>
        <CardBody>
          <LeftPane>
            <PathRow>
              <PathBar>
                <PathBack><svg width="10" height="18" viewBox="0 0 10 18" fill="none" stroke="currentColor"><path d="M8 1 2 9 8 17" /></svg></PathBack>
                <PathText>{d.path}</PathText>
                <CopyBtn><Copy size={13} strokeWidth={1.4} /></CopyBtn>
              </PathBar>
              <CreateBtn>Create new path <PathSlashes /></CreateBtn>
            </PathRow>
            <ObjHead>
              <Check />
              <NameHead><SortUp />Name</NameHead>
              <span>Last Modified</span>
              <span>Size</span>
            </ObjHead>
            <ObjViewport>
              <ObjScroll>
                {d.rows.map((r, i) => (
                  <ObjRow key={r.name + i} $sel={d.kind === "zip" && i === 0}>
                    <Check />
                    <NameCell><FileGlyph kind={d.kind} w={13} h={15} />{r.name}</NameCell>
                    <span>{r.time}</span>
                    <span>{r.size}</span>
                  </ObjRow>
                ))}
              </ObjScroll>
            </ObjViewport>
          </LeftPane>
          <RightPane>
            <PaneTitle>
              <FileGlyph kind={d.kind} w={21} h={25} />
              {d.title}
              <PaneEnd><ArrowRightFromLine size={13} strokeWidth={1.3} /></PaneEnd>
            </PaneTitle>
            <ActionsBox>
              <ActionsHead>Actions:</ActionsHead>
              {actions.map((a) => (
                <ActionRow key={a.label} $off={a.off}>{a.icon}{a.label}</ActionRow>
              ))}
            </ActionsBox>
            <DeleteBtn><Trash2 size={14} fill="#c51b3f" />Delete</DeleteBtn>
            <InfoHead>Object Info<ClusterIcon /></InfoHead>
            <InfoList>
              <InfoItem>
                <InfoLabel>Name:</InfoLabel>
                {d.infoName.map((l) => <div key={l}>{l}</div>)}
              </InfoItem>
              <InfoItem><InfoLabel>Size:</InfoLabel>{d.size}</InfoItem>
              <InfoItem><InfoLabel>Last Modified:</InfoLabel>{d.modified}</InfoItem>
              <InfoItem><InfoLabel>ETAG:</InfoLabel>{d.etag}</InfoItem>
              <InfoItem><InfoLabel>Tags:</InfoLabel>N/A</InfoItem>
            </InfoList>
          </RightPane>
        </CardBody>
      </DetailCard>
    </Main>
  );
}

const GNB = "_1_gNB-Eurecom-5GNRBox-00002.xml";
const zipRows: [string, string, string, string, string][] = [
  ["0644", "0645", "kafk...", "12:13", "490.0 B"],
  ["0645", "0645", "kafka-pr...", "12:14", "491.0 B"],
  ["0645", "0646", "kafka-pr...", "12:14", "490.0 B"],
  ["0646", "0646", "kafka-pr...", "12:15", "491.0 B"],
  ["0646", "0647", "kafka-pr...", "12:15", "490.0 B"],
  ["0647", "0647", "kafka-pr...", "12:16", "490.0 B"],
  ["0647", "0648", "kafka-pr...", "12:16", "490.0 B"],
  ["0648", "0648", "kafka-pr...", "12:17", "490.0 B"],
  ["0648", "0649", "kafka-pr...", "12:17", "490.0 B"],
  ["0649", "0649", "kafka-pr...", "12:18", "491.0 B"],
  ["0649", "0650", "kafka-pr...", "12:18", "488.0 B"],
  ["0650", "0650", "kafka-pr...", "12:19", "489.0 B"],
  ["0650", "0651", "kafka-pr...", "12:19", "491.0 B"],
  ["0651", "0651", "kafka-pro...", "12:20", "490.0 B"],
  ["0651", "0652", "kafka-pr...", "12:20", "490.0 B"],
  ["0652", "0652", "kafka-pr...", "12:21", "490.0 B"],
];
const xmlRows: [string, string, string][] = [
  ["0644", "0644", "12:13"], ["0644", "0645", "12:13"], ["0645", "0645", "12:14"], ["0645", "0646", "12:14"],
  ["0646", "0646", "12:15"], ["0646", "0647", "12:15"], ["0647", "0647", "12:16"], ["0647", "0648", "12:16"],
  ["0648", "0648", "12:17"], ["0648", "0649", "12:17"], ["0649", "0649", "12:18"], ["0649", "0650", "12:18"],
  ["0650", "0650", "12:19"], ["0650", "0651", "12:19"], ["0651", "0651", "12:20"], ["0651", "0652", "12:20"],
];

const SEP = "\u00a0 / \u00a0";
const jsonDetail: Detail = {
  bucket: "pm-files-json",
  created: "Sun, Oct 06 2024 12:45:24 (GMT+5:30)",
  usage: "28.9 KiB - 59 Objects",
  path: `pm-files-json${SEP}gNB-Eurecom-5GNRBox-00002${SEP}A20241025.0644+0000-0645+0000_1_gNB-Eurecom-5GNRBox-00002.xmlkafka-producer-pm-xml2json-0.json.gz`,
  kind: "zip",
  rows: zipRows.map(([a, b, s, t, z]) => ({ name: `A20241025.${a}+0000-${b}+0000${GNB}${s}`, time: `Today, ${t}`, size: z })),
  title: "A20241025.0644+0000-06...",
  infoName: ["A20241025.0644+0000-0645+0000_", "1_gNB-", "Eurecom-5GNRBox-00002.xmlkafka-", "producer-pm-xml2json-0.json.gz"],
  size: "490.0 B",
  modified: "8 minutes ago",
  etag: "3b53e9ebdb29260219a130a5352238bf",
};
const ropDetail: Detail = {
  bucket: "ropfiles",
  created: "Sun, Oct 06 2024 12:37:27 (GMT+5:30)",
  usage: "491.1 KiB - 324 Objects",
  path: `ropfiles${SEP}gNB-Eurecom-5GNRBox-00002${SEP}A20241025.0651+0000-0652+0000_1_gNB-Eurecom-5GNRBox-00002.xml`,
  kind: "xml",
  rows: xmlRows.map(([a, b, t]) => ({ name: `A20241025.${a}+0000-${b}+0000${GNB}`, time: `Today, ${t}`, size: "1.5 KiB" })),
  title: "A20241025.0651+0000-06...",
  infoName: ["A20241025.0651+0000-0652+0000_1", "_gNB-Eurecom-5GNRBox-00002.xml"],
  size: "1.5 KiB",
  modified: "45 seconds ago",
  etag: "ee72a708ec244d451a3e92bee92a19ce",
};

const tabs = [
  { title: "O D L UX", icon: <OdluxFav /> },
  { title: "json-file-ready-kp - Redpa", icon: <RedFav />, fade: true },
  { title: "MinIO Console", icon: <Flamingo color="#e8487f" h={20} />, active: true },
  { title: "OAI | iosmcn | InfluxDB", icon: <InfluxFav /> },
];

function Tabs() {
  return (
    <TabStrip>
      <FxView>
        <svg width="16" height="18" viewBox="0 0 16 18" fill="none" stroke="#33323a" strokeWidth="1.300">
          <path d="M3 1.500H13M1.500 4.500H14.500V16.500H1.500Z" /><circle cx="8" cy="10.500" r="1" fill="#33323a" />
        </svg>
      </FxView>
      <TabList>
        {tabs.map((t) => (
          <TabItem key={t.title} $active={t.active}>
            {t.icon}
            <TabTitle $fade={t.fade}>{t.title}</TabTitle>
            <X size={14} strokeWidth={1.2} />
          </TabItem>
        ))}
      </TabList>
      <NewTab><Plus size={16} strokeWidth={1.4} /></NewTab>
      <TabRight>
        <ChevronDown size={18} strokeWidth={1.2} style={{ marginRight: 48 }} />
        <WinBtn><Minus size={10} /></WinBtn>
        <WinBtn><Square size={9} /></WinBtn>
        <WinBtn><X size={12} strokeWidth={1.4} /></WinBtn>
      </TabRight>
    </TabStrip>
  );
}

function UbuntuDock() {
  const dots = (n: number) => <DockDots>{Array.from({ length: n }).map((_, i) => <i key={i} />)}</DockDots>;
  return (
    <Dock>
      <DockHighlight>{dots(1)}<Firefox /></DockHighlight>
      <DockItem><Thunderbird /></DockItem>
      <DockItem>{dots(1)}<FilesIcon /></DockItem>
      <DockItem><Rhythmbox /></DockItem>
      <DockItem><Writer /></DockItem>
      <DockItem><Software /></DockItem>
      <DockItem><HelpIcon /></DockItem>
      <DockItem>{dots(3)}<TerminalIcon /></DockItem>
      <DockSep />
      <DockItem><DriveIcon /></DockItem>
      <DockItem><TrashIcon /></DockItem>
      <AppGrid>{Array.from({ length: 9 }).map((_, i) => <i key={i} />)}</AppGrid>
    </Dock>
  );
}

export default function App() {
  return (
    <>
      <GlobalStyle />
      <Page>
        <FirstShot>
          <TabTail />
          <Browser $zoom={1.05} $h={404}>
            <BrowserBar host="localhost" path=":9001/browser" />
            <Body>
              <Sidebar />
              <BucketList />
            </Body>
          </Browser>
        </FirstShot>
        <SecondShot>
          <TopBar>
            <TopLeft>
              <span>Activities</span>
              <TopApp>
                <svg width="14" height="14" viewBox="0 0 14 14"><circle cx="7" cy="7" r="6.500" fill="#8c8c8c" /></svg>
                Firefox
              </TopApp>
            </TopLeft>
            <TopCenter>
              <span>Oct 25&nbsp; 12:21</span>
              <Bell size={15} strokeWidth={1.5} />
            </TopCenter>
            <TopRight>
              <Network size={15} strokeWidth={2.2} />
              <Volume2 size={15} strokeWidth={1.8} />
              <Power size={15} strokeWidth={1.6} />
            </TopRight>
          </TopBar>
          <DesktopRow>
            <UbuntuDock />
            <Browser $zoom={1} $h={1006}>
              <Tabs />
              <BrowserBar
                host="localhost"
                path=":9001/browser/pm-files-json/gNB-Eurecom-5GNRBox-00002%2FA20241025.0644%2B0000-0645%2B0000_1_gNB-Eurecom-5GNRBox-00002.xmlkafka-producer-pm-xml2js"
              />
              <Body>
                <Sidebar />
                <BucketDetail d={jsonDetail} />
              </Body>
            </Browser>
          </DesktopRow>
        </SecondShot>
        <ThirdShot>
          <Browser $zoom={1.0375} $h={964}>
            <BrowserBar
              host="localhost"
              path=":9001/browser/ropfiles/gNB-Eurecom-5GNRBox-00002%2FA20241025.0651%2B0000-0652%2B0000_1_gNB-Eurecom-5GNRBox-00002.xml"
            />
            <Body>
              <Sidebar />
              <BucketDetail d={ropDetail} />
            </Body>
          </Browser>
          <ScrollThumb />
        </ThirdShot>
      </Page>
    </>
  );
}
